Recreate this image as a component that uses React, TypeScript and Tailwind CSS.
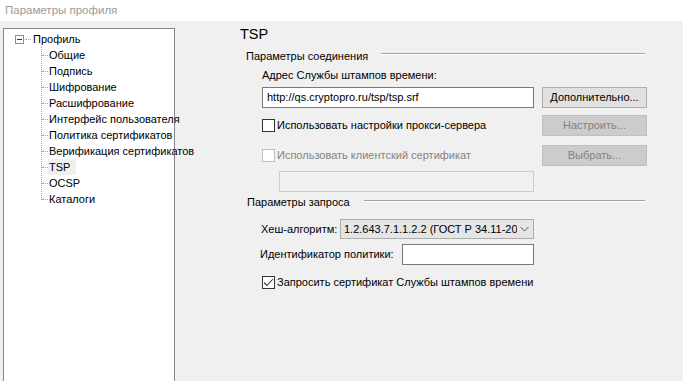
import React from "react";

function Check({ checked, disabled }: { checked?: boolean; disabled?: boolean }) {
  return (
    <span
      className={
        disabled
          ? "w-[13px] h-[13px] border border-[#bcbcbc] bg-white flex items-center justify-center shrink-0"
          : "w-[13px] h-[13px] border border-[#333333] bg-white flex items-center justify-center shrink-0"
      }
    >
      {checked && (
        <svg width="11" height="11" viewBox="0 0 11 11">
          <path d="M1 5.5 L4 8.5 L10 2" stroke="#333333" strokeWidth="1.1" fill="none" />
        </svg>
      )}
    </span>
  );
}

function Btn({ children, disabled }: { children: React.ReactNode; disabled?: boolean }) {
  return (
    <div
      className={
        disabled
          ? "w-[105px] h-[21px] border border-[#bfbfbf] bg-[#cccccc] text-[#838383] flex items-center justify-center shrink-0"
          : "w-[105px] h-[21px] border border-[#adadad] bg-[#e1e1e1] text-black flex items-center justify-center shrink-0"
      }
    >
      {children}
    </div>
  );
}

const treeItems = [
  "Общие",
  "Подпись",
  "Шифрование",
  "Расшифрование",
  "Интерфейс пользователя",
  "Политика сертификатов",
  "Верификация сертификатов",
  "TSP",
  "OCSP",
  "Каталоги",
];

export default function App() {
  return (
    <div className="w-[683px] h-[381px] overflow-hidden flex flex-col font-['Liberation_Sans',Arial,sans-serif] text-[11px] leading-none text-black bg-[#f0f0f0] whitespace-nowrap">
      {/* title bar */}
      <div className="h-[21px] bg-white flex items-center pl-[5px] text-[#9a9a9a] text-[11.5px] shrink-0">
        Параметры профиля
      </div>
      {/* body */}
      <div className="flex-1 flex">
        {/* tree */}
        <div className="mt-[7px] ml-[3px] w-[172px] border border-b-0 border-[#828790] bg-white shrink-0 relative">
          <div className="flex items-center h-[16px] mt-[2px] pl-[11px]">
            <span className="w-[9px] h-[9px] border border-[#919191] flex items-center justify-center bg-white shrink-0">
              <span className="w-[5px] h-px bg-[#333333]" />
            </span>
            <span className="w-[6px] ml-[1px] border-t border-dotted border-[#a0a0a0] shrink-0" />
            <span className="ml-[1px] px-px">Профиль</span>
          </div>
          <div className="relative ml-[37px]">
            <div className="absolute left-0 top-0 h-[153px] border-l border-dotted border-[#a0a0a0]" />
            {treeItems.map((t) => (
              <div key={t} className="flex items-center h-[16px]">
                <span className="w-[6px] ml-[1px] border-t border-dotted border-[#a0a0a0] shrink-0" />
                <span
                  className={
                    t === "TSP"
                      ? "h-[16px] flex items-center px-px bg-[#f0f0f0] pr-[6px]"
                      : "h-[16px] flex items-center px-px"
                  }
                >
                  {t}
                </span>
              </div>
            ))}
          </div>
        </div>
        {/* right pane */}
        <div className="flex-1 flex flex-col pl-[65px]">
          <div className="h-[18px] mt-[4px] flex items-center text-[14.5px]">TSP</div>
          {/* group 1 */}
          <div className="h-[18px] mt-[4px] flex items-center pl-[6px]">
            <span className="w-[135px] shrink-0">Параметры соединения</span>
            <span className="self-start mt-[6px] w-[264px] h-[2px] border-t border-[#a0a0a0] border-b border-b-white" />
          </div>
          <div className="h-[16px] mt-[2px] flex items-center pl-[22px]">Адрес Службы штампов времени:</div>
          <div className="h-[21px] mt-[4px] flex pl-[22px]">
            <div className="w-[272px] h-[21px] border border-[#7a7a7a] bg-white flex items-center pl-[4px]">
              http://qs.cryptopro.ru/tsp/tsp.srf
            </div>
            <div className="ml-[8px]">
              <Btn>Дополнительно...</Btn>
            </div>
          </div>
          <div className="h-[21px] mt-[7px] flex pl-[22px]">
            <div className="w-[280px] flex items-center">
              <Check />
              <span className="ml-[2px]">Использовать настройки прокси-сервера</span>
            </div>
            <Btn disabled>Настроить...</Btn>
          </div>
          <div className="h-[21px] mt-[9px] flex pl-[22px]">
            <div className="w-[280px] flex items-center text-[#838383]">
              <Check disabled />
              <span className="ml-[2px]">Использовать клиентский сертификат</span>
            </div>
            <Btn disabled>Выбрать...</Btn>
          </div>
          <div className="h-[21px] mt-[5px] pl-[39px] flex">
            <div className="w-[255px] h-[21px] border border-[#cccccc] bg-[#f0f0f0]" />
          </div>
          {/* group 2 */}
          <div className="h-[18px] mt-[1px] flex items-center pl-[7px]">
            <span className="w-[117px] shrink-0">Параметры запроса</span>
            <span className="self-start mt-[7px] w-[281px] h-[2px] border-t border-[#a0a0a0] border-b border-b-white" />
          </div>
          <div className="h-[20px] mt-[8px] flex items-center pl-[21px]">
            <span className="w-[79px] shrink-0">Хеш-алгоритм:</span>
            <div className="w-[194px] h-[20px] border border-[#acacac] bg-[#e5e5e5] flex items-center pl-[3px] overflow-hidden">
              <span className="flex-1 whitespace-nowrap overflow-hidden">1.2.643.7.1.1.2.2 (ГОСТ Р 34.11-2012</span>
              <svg width="16" height="10" viewBox="0 0 16 10" className="shrink-0">
                <path d="M3.5 3 L7.5 7 L11.5 3" stroke="#555" strokeWidth="1" fill="none" />
              </svg>
            </div>
          </div>
          <div className="h-[21px] mt-[5px] flex items-center pl-[20px]">
            <span className="w-[142px] shrink-0">Идентификатор политики:</span>
            <div className="w-[132px] h-[21px] border border-[#7a7a7a] bg-white" />
          </div>
          <div className="h-[16px] mt-[9px] flex items-center pl-[22px]">
            <Check checked />
            <span className="ml-[2px]">Запросить сертификат Службы штампов времени</span>
          </div>
        </div>
      </div>
    </div>
  );
}
